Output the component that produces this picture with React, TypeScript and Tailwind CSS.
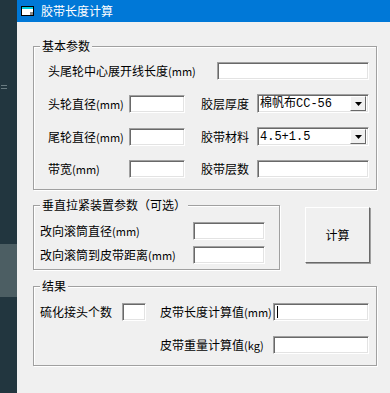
import React from "react";

const font = { fontFamily: '"Noto Sans CJK SC", "Liberation Sans", sans-serif' };
const mono = { fontFamily: '"Liberation Mono", "Noto Sans CJK SC", monospace' };

function Sunken({ w, cursor = false }: { w: string; cursor?: boolean }) {
  return (
    <div
      className={`${w} flex h-[18px] shrink-0 items-center border border-t-[#a0a0a0] border-l-[#a0a0a0] border-b-[#ffffff] border-r-[#ffffff] bg-white shadow-[inset_1px_1px_0_#696969,inset_-1px_-1px_0_#e3e3e3]`}
    >
      {cursor && <div className="ml-[3px] h-[12px] w-px bg-black" />}
    </div>
  );
}

function Combo({ value }: { value: string }) {
  return (
    <div className="flex h-[19px] w-[112px] shrink-0 items-center border border-t-[#a0a0a0] border-l-[#a0a0a0] border-b-white border-r-white bg-white shadow-[inset_1px_1px_0_#696969,inset_-1px_-1px_0_#e3e3e3]">
      <span className="flex-1 whitespace-nowrap pl-[2px] text-[12px] leading-none text-black" style={mono}>
        {value}
      </span>
      <div className="mr-[2px] flex h-[15px] w-[16px] items-center justify-center border border-t-white border-l-white border-b-[#696969] border-r-[#696969] bg-[#f0f0f0]">
        <svg width="7" height="4" viewBox="0 0 7 4">
          <path d="M0 0h7L3.5 4z" fill="#000" />
        </svg>
      </div>
    </div>
  );
}

function Group({
  title,
  className,
  children,
}: {
  title: string;
  className: string;
  children: React.ReactNode;
}) {
  return (
    <div
      className={`relative shrink-0 border border-[#a0a0a0] shadow-[inset_1px_1px_0_#fff,1px_1px_0_#fff] ${className}`}
    >
      <span className="absolute left-[6px] top-[-9px] whitespace-nowrap bg-[#f0f0f0] px-[2px] text-[12px] leading-[16px] text-black">
        {title}
      </span>
      {children}
    </div>
  );
}

function Label({ w, children }: { w: string; children: React.ReactNode }) {
  return (
    <span className={`${w} shrink-0 whitespace-nowrap text-[12px] leading-[18px] text-black`}>
      {children}
    </span>
  );
}

function Unit({ children }: { children: React.ReactNode }) {
  return <span className="text-[11px]">{children}</span>;
}

export default function App() {
  return (
    <div className="flex h-[393px] w-[390px] overflow-hidden" style={font}>
      <div className="flex w-[17px] shrink-0 flex-col bg-[#22363f]">
        <div className="mt-[85px] ml-[1px] flex w-[6px] flex-col gap-[2px]">
          <div className="h-px bg-[#6a7c82]" />
          <div className="h-px bg-[#6a7c82]" />
        </div>
        <div className="mt-[155px] h-[53px] bg-[#4c5e63]" />
      </div>

      <div className="flex flex-1 flex-col bg-[#f0f0f0]">
        <div className="flex h-[22px] items-center bg-[#0078d7] pl-[4px]">
          <svg width="13" height="10" viewBox="0 0 13 10">
            <rect x="0.5" y="0.5" width="12" height="9" fill="#fff" stroke="#000" />
            <rect x="1" y="1" width="11" height="2" fill="#00d0e0" />
            <rect x="9" y="6" width="3" height="3" fill="#8a8a8a" />
          </svg>
          <span className="ml-[7px] text-[12px] leading-none text-white">胶带长度计算</span>
        </div>

        <div className="flex flex-col pl-[16px]">
          <Group title="基本参数" className="mt-[24px] h-[144px] w-[344px]">
            <div className="flex flex-col gap-[14px] pl-[14px] pt-[15px]">
              <div className="flex items-center">
                <Label w="w-[169px]">
                  头尾轮中心展开线长度<Unit>(mm)</Unit>
                </Label>
                <Sunken w="w-[152px]" />
              </div>
              <div className="flex items-center">
                <Label w="w-[81px]">
                  头轮直径<Unit>(mm)</Unit>
                </Label>
                <Sunken w="w-[56px]" />
                <Label w="ml-[16px] w-[56px]">胶层厚度</Label>
                <Combo value="棉帆布CC-56" />
              </div>
              <div className="flex items-center">
                <Label w="w-[81px]">
                  尾轮直径<Unit>(mm)</Unit>
                </Label>
                <Sunken w="w-[56px]" />
                <Label w="ml-[16px] w-[56px]">胶带材料</Label>
                <Combo value="4.5+1.5" />
              </div>
              <div className="flex items-center">
                <Label w="w-[81px]">
                  带宽<Unit>(mm)</Unit>
                </Label>
                <Sunken w="w-[56px]" />
                <Label w="ml-[16px] w-[56px]">胶带层数</Label>
                <Sunken w="w-[112px]" />
              </div>
            </div>
          </Group>

          <div className="mt-[15px] flex items-start">
            <Group title="垂直拉紧装置参数（可选）" className="h-[65px] w-[247px]">
              <div className="flex flex-col gap-[6px] pl-[6px] pt-[16px]">
                <div className="flex items-center">
                  <Label w="w-[153px]">
                    改向滚筒直径<Unit>(mm)</Unit>
                  </Label>
                  <Sunken w="w-[72px]" />
                </div>
                <div className="flex items-center">
                  <Label w="w-[153px]">
                    改向滚筒到皮带距离<Unit>(mm)</Unit>
                  </Label>
                  <Sunken w="w-[72px]" />
                </div>
              </div>
            </Group>
            <button
              type="button"
              className="ml-[25px] mt-[2px] h-[56px] w-[65px] border border-t-white border-l-white border-b-[#696969] border-r-[#696969] bg-[#f0f0f0] text-[12px] text-black shadow-[1px_1px_0_#a0a0a0]"
            >
              计算
            </button>
          </div>

          <Group title="结果" className="mt-[16px] h-[80px] w-[344px]">
            <div className="flex flex-col gap-[15px] pl-[6px] pt-[16px]">
              <div className="flex items-center">
                <Label w="w-[82px]">硫化接头个数</Label>
                <Sunken w="w-[24px]" />
                <Label w="ml-[14px] w-[113px]">
                  皮带长度计算值<Unit>(mm)</Unit>
                </Label>
                <Sunken w="w-[96px]" cursor />
              </div>
              <div className="flex items-center">
                <Label w="ml-[120px] w-[113px]">
                  皮带重量计算值<Unit>(kg)</Unit>
                </Label>
                <Sunken w="w-[96px]" />
              </div>
            </div>
          </Group>
        </div>
      </div>
    </div>
  );
}
